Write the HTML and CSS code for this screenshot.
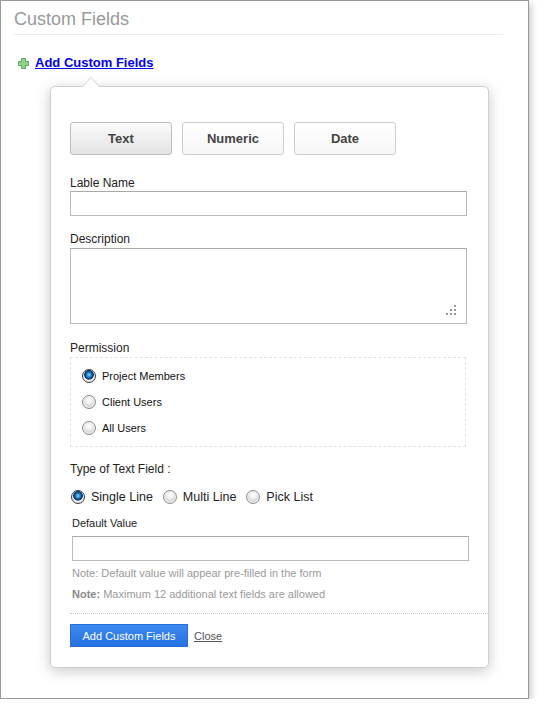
FILE: index.html
```html
<!DOCTYPE html>
<html>
<head>
	<title>Custom Fields</title>
	<link rel="stylesheet" href="styles.css">
</head>
<body>
	<div class="panel">
		<header class="panel-title">Custom Fields</header>
		<div class="add-row">
			<svg class="plus-icon" width="11" height="11" viewBox="0 0 11 11">
				<path d="M3.5 0.5h4v3h3v4h-3v3h-4v-3h-3v-4h3z" fill="#8fd18f" stroke="#5aa85a" stroke-width="1"/>
			</svg>
			<a href="#" class="add-link">Add Custom Fields</a>
		</div>

		<div class="popup">
			<div class="tabs">
				<button class="tab active">Text</button>
				<button class="tab">Numeric</button>
				<button class="tab">Date</button>
			</div>

			<label class="field-label first">Lable Name</label>
			<input type="text" class="text-input">

			<label class="field-label desc-label">Description</label>
			<div class="textarea-wrap">
				<textarea class="text-area"></textarea>
				<span class="grip"></span>
			</div>

			<label class="field-label">Permission</label>
			<div class="permission-box">
				<label class="perm-option"><input type="radio" class="radio" name="perm" checked> Project Members</label>
				<label class="perm-option"><input type="radio" class="radio" name="perm"> Client Users</label>
				<label class="perm-option"><input type="radio" class="radio" name="perm"> All Users</label>
			</div>

			<label class="field-label type-label">Type of Text Field :</label>
			<div class="type-row">
				<label class="type-option"><input type="radio" class="radio" name="type" checked> Single Line</label>
				<label class="type-option"><input type="radio" class="radio" name="type"> Multi Line</label>
				<label class="type-option"><input type="radio" class="radio" name="type"> Pick List</label>
			</div>

			<div class="default-block">
				<label class="small-label">Default Value</label>
				<input type="text" class="text-input">
				<p class="note">Note: Default value will appear pre-filled in the form</p>
				<p class="note second"><b>Note:</b> Maximum 12 additional text fields are allowed</p>
			</div>

			<div class="actions">
				<button class="submit-btn">Add Custom Fields</button>
				<a href="#" class="close-link">Close</a>
			</div>
		</div>
	</div>
</body>
</html>
```

FILE: styles.css
```css
body{
	margin: 0;
	font-family: "Liberation Sans", Arial, sans-serif;
	color: #222;
	background: #fff;
}

.panel{
	width: 527px;
	height: 697px;
	border: 1px solid #999;
	box-shadow: 3px 3px 6px rgba(0, 0, 0, 0.18);
}

.panel-title{
	margin: 0 25px 0 13px;
	padding-top: 8px;
	padding-bottom: 5px;
	font-size: 18px;
	line-height: 20px;
	color: #999;
	border-bottom: 1px solid #eaeaea;
}

.add-row{
	display: flex;
	align-items: center;
	margin-top: 21px;
	padding-left: 17px;
	height: 14px;
}

.plus-icon{
	margin-right: 6px;
}

.add-link{
	font-size: 13px;
	font-weight: bold;
	color: #0000ee;
	line-height: 14px;
}

.popup{
	position: relative;
	margin: 16px 0 0 49px;
	width: 398px;
	padding: 35px 20px 20px 19px;
	border: 1px solid #cfcfcf;
	border-radius: 5px;
	box-shadow: 0 3px 14px rgba(0, 0, 0, 0.22);
	background: #fff;
}

/* little pointer under the link */
.popup::before,
.popup::after{
	content: "";
	position: absolute;
	left: 31px;
	border: 9px solid transparent;
	border-top: 0;
}
.popup::before{
	top: -10px;
	border-bottom: 10px solid #d0d0d0;
}
.popup::after{
	top: -9px;
	border-bottom: 10px solid #fff;
}

.tabs{
	display: flex;
	gap: 10px;
}

.tab{
	width: 102px;
	height: 33px;
	border: 1px solid #cdcdcd;
	border-radius: 3px;
	background: linear-gradient(#fefefe, #f7f7f7);
	font-family: inherit;
	font-size: 13px;
	font-weight: bold;
	color: #444;
}

.tab.active{
	border-color: #bdbdbd;
	background: linear-gradient(#fbfbfb, #e3e3e3);
}

.field-label{
	display: block;
	margin-top: 17px;
	margin-bottom: 2px;
	font-size: 12px;
	line-height: 14px;
	color: #222;
}
.field-label.first{
	margin-top: 21px;
	margin-bottom: 1px;
}
.field-label.desc-label{
	margin-top: 16px;
}

.text-input{
	display: block;
	box-sizing: border-box;
	width: 397px;
	height: 25px;
	margin: 0;
	border: 1px solid #b9b9b9;
	border-top-color: #a9a9a9;
	background: #fff;
}

.textarea-wrap{
	position: relative;
	width: 397px;
	height: 76px;
}

.text-area{
	display: block;
	box-sizing: border-box;
	width: 397px;
	height: 76px;
	margin: 0;
	border: 1px solid #b9b9b9;
	border-top-color: #a9a9a9;
	resize: none;
}

/* dotted resize grip in the corner */
.grip{
	position: absolute;
	right: 11px;
	bottom: 9px;
	width: 2px;
	height: 2px;
	background: #999;
	box-shadow: 0 -4px #999, 0 -8px #999, -4px 0 #999, -4px -4px #999, -8px 0 #999;
}

.permission-box{
	box-sizing: border-box;
	width: 396px;
	height: 90px;
	padding: 5px 0 0 11px;
	border: 1px dashed #e2e2e2;
}

.perm-option{
	display: flex;
	align-items: center;
	height: 26px;
	font-size: 11px;
	color: #111;
}

.radio{
	appearance: none;
	box-sizing: border-box;
	width: 14px;
	height: 14px;
	margin: 0 6px 0 0;
	border: 1px solid #8c8c8c;
	border-radius: 50%;
	background: radial-gradient(circle at 50% 35%, #ffffff 0, #f2f2f2 3px, #d4d4d4 6px);
	box-shadow: inset 0 0 0 1px #f4f4f4;
}

.radio:checked{
	border-color: #3c3c3c;
	background: radial-gradient(circle at 50% 40%, #8ad6ff 0, #2a8cd4 2px, #0d4f8e 3.5px, #0a3466 4.5px, #fff 5.2px, #e8e8e8 6px);
	box-shadow: none;
}

.type-label{
	margin-top: 15px;
}

.type-row{
	display: flex;
	align-items: center;
	height: 20px;
	margin-top: 11px;
	padding-left: 1px;
}

.type-option{
	display: flex;
	align-items: center;
	margin-right: 10px;
	font-size: 12.5px;
	color: #222;
}

.default-block{
	padding-left: 2px;
}

.small-label{
	display: block;
	margin-top: 9px;
	margin-bottom: 6px;
	font-size: 11px;
	line-height: 14px;
	color: #222;
}

.note{
	margin: 5px 0 0;
	font-size: 11px;
	line-height: 14px;
	color: #999;
}
.note.second{
	margin-top: 7px;
}
.note b{
	color: #888;
}

.actions{
	display: flex;
	align-items: center;
	margin-right: -20px;
	margin-top: 12px;
	padding-top: 10px;
	border-top: 1px dotted #c4c4c4;
}

.submit-btn{
	width: 118px;
	height: 23px;
	border: 1px solid #2a6fd6;
	background: linear-gradient(#3d8af0, #2470e0);
	color: #fff;
	font-family: inherit;
	font-size: 11px;
}

.close-link{
	margin-left: 6px;
	font-size: 11px;
	color: #555;
}
```
